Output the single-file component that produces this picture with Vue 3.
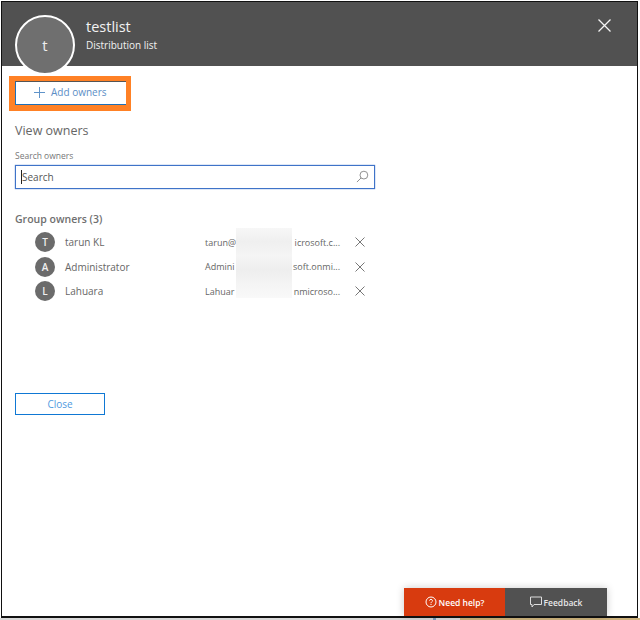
<script setup>
const owners = [
  { initial: 'T', name: 'tarun KL', emailStart: 'tarun@', emailEnd: 'icrosoft.c...' },
  { initial: 'A', name: 'Administrator', emailStart: 'Admini', emailEnd: 'soft.onmi...' },
  { initial: 'L', name: 'Lahuara', emailStart: 'Lahuar', emailEnd: 'nmicroso...' },
]
</script>

<template>
  <div class="page">
    <div class="panel">
      <header class="panel-header">
        <div class="avatar">t</div>
        <div class="titles">
          <div class="title">testlist</div>
          <div class="subtitle">Distribution list</div>
        </div>
        <svg class="close-x" width="13" height="13" viewBox="0 0 13 13">
          <path d="M0.5 0.5 L12.5 12.5 M12.5 0.5 L0.5 12.5" stroke="#f4f4f4" stroke-width="1.3" fill="none" />
        </svg>
      </header>

      <div class="content">
        <div class="highlight">
          <button class="add-btn">
            <svg width="11" height="11" viewBox="0 0 11 11">
              <path d="M5.5 0 V11 M0 5.5 H11" stroke="#5f93c9" stroke-width="1" fill="none" />
            </svg>
            <span>Add owners</span>
          </button>
        </div>

        <h2 class="section-title">View owners</h2>

        <div class="field-label">Search owners</div>
        <div class="search">
          <span class="caret"></span>
          <span class="search-text">Search</span>
          <svg class="search-icon" width="13" height="13" viewBox="0 0 14 14">
            <circle cx="8.5" cy="5.5" r="4.2" stroke="#888" stroke-width="1" fill="none" />
            <path d="M5.5 8.5 L1 13" stroke="#888" stroke-width="1" fill="none" />
          </svg>
        </div>

        <div class="group-title">Group owners (3)</div>
        <div class="owners">
          <div v-for="o in owners" :key="o.initial" class="owner">
            <div class="owner-avatar">{{ o.initial }}</div>
            <div class="owner-name">{{ o.name }}</div>
            <div class="owner-email">
              <span>{{ o.emailStart }}</span>
              <span>{{ o.emailEnd }}</span>
            </div>
            <svg class="owner-x" width="10" height="10" viewBox="0 0 10 10">
              <path d="M0.5 0.5 L9.5 9.5 M9.5 0.5 L0.5 9.5" stroke="#777" stroke-width="1" fill="none" />
            </svg>
          </div>
          <div class="blur-patch"></div>
        </div>

        <button class="close-btn">Close</button>
      </div>

      <div class="help-bar">
        <div class="help-btn need">
          <svg width="12" height="12" viewBox="0 0 12 12">
            <circle cx="6" cy="6" r="5" stroke="#fff" stroke-width="1" fill="none" />
            <path d="M4.5 4.6 C4.6 2.9 7.5 3 7.5 4.7 C7.5 5.8 6 5.8 6 7.2" stroke="#fff" stroke-width="1" fill="none" />
            <rect x="5.5" y="8" width="1" height="1" fill="#fff" />
          </svg>
          <span>Need help?</span>
        </div>
        <div class="help-btn feedback">
          <svg width="12" height="12" viewBox="0 0 12 12">
            <path d="M0.5 1 H11.5 V8.5 H4 L2 11 V8.5 H0.5 Z" stroke="#ddd" stroke-width="1" fill="none" />
          </svg>
          <span>Feedback</span>
        </div>
      </div>
    </div>
    <div class="taskbar"></div>
  </div>
</template>

<style>
html, body {
  margin: 0;
  background: #fff;
}
</style>

<style scoped>
.page {
  width: 640px;
  height: 620px;
  overflow: hidden;
  box-sizing: border-box;
  padding: 1px 0 0 1px;
  font-family: "Open Sans", "Liberation Sans", sans-serif;
  color: #444;
}

.panel {
  position: relative;
  width: 637px;
  height: 617px;
  box-sizing: border-box;
  border: 1px solid #111;
  border-bottom-width: 2px;
  background: #fff;
  display: flex;
  flex-direction: column;
}

.taskbar {
  height: 2px;
  margin-left: -1px;
  background: linear-gradient(90deg, #d8d8d8 0 433px, #7f9fc0 433px 436px, #dcdcdc 436px 460px, #cdb27c 460px);
}

.panel-header {
  position: relative;
  height: 64px;
  flex-shrink: 0;
  background: #515151;
  display: flex;
  padding-left: 84px;
  padding-right: 26px;
  box-sizing: border-box;
  align-items: flex-start;
  justify-content: space-between;
}

.avatar {
  position: absolute;
  left: 13px;
  top: 13px;
  width: 60px;
  height: 60px;
  box-sizing: border-box;
  border: 2px solid #fff;
  border-radius: 50%;
  background: #6f6f6f;
  color: #eee;
  font-size: 15px;
  display: flex;
  align-items: center;
  justify-content: center;
}

.titles {
  padding-top: 14px;
  color: #f2f2f2;
}

.title {
  font-size: 14.5px;
  line-height: 22px;
}

.subtitle {
  font-size: 10px;
  line-height: 15px;
}

.close-x {
  margin-top: 17px;
}

.content {
  flex: 1;
  padding: 10px 0 0 7px;
}

.highlight {
  width: 122px;
  height: 35px;
  box-sizing: border-box;
  border-style: solid;
  border-color: #ff8125;
  border-width: 5px 5px 6px 6px;
  background: #fff;
}

.add-btn {
  width: 111px;
  height: 24px;
  box-sizing: border-box;
  border: 1px solid #1d6fb8;
  border-right: 0;
  border-top-color: #555;
  background: #fff;
  color: #5b8ec6;
  font-family: inherit;
  font-size: 10px;
  padding: 0 0 2px 18px;
  display: flex;
  align-items: center;
  gap: 6px;
}

.section-title {
  margin: 11px 0 0 6px;
  font-size: 12.5px;
  line-height: 18px;
  font-weight: 400;
  color: #666;
}

.field-label {
  margin: 10px 0 0 6px;
  font-size: 8.5px;
  line-height: 12px;
  color: #777;
}

.search {
  margin: 3px 0 0 6px;
  width: 360px;
  height: 24px;
  box-sizing: border-box;
  border: 1px solid #3f73c8;
  box-shadow: 0 0 1px #3f73c8;
  display: flex;
  align-items: center;
  padding: 0 5px 1px 5px;
}

.caret {
  width: 1px;
  height: 14px;
  background: #222;
}

.search-text {
  flex: 1;
  font-size: 10px;
  color: #555;
}

.group-title {
  margin: 23px 0 0 6px;
  font-size: 10.5px;
  line-height: 14px;
  font-weight: 600;
  color: #6f6f6f;
}

.owners {
  position: relative;
  margin: 4px 0 0 26px;
  width: 335px;
}

.blur-patch {
  position: absolute;
  left: 201px;
  top: -2px;
  width: 56px;
  height: 70px;
  background: linear-gradient(180deg, #f7f7f7, #efefef 20%, #f5f5f5 40%, #eeeeee 60%, #f4f4f4 80%, #f9f9f9);
}

.owner {
  height: 24.5px;
  display: flex;
  align-items: center;
}

.owner-avatar {
  width: 20px;
  height: 20px;
  border-radius: 50%;
  background: #6b6b6b;
  color: #f0f0f0;
  font-size: 10px;
  font-weight: 600;
  display: flex;
  align-items: center;
  justify-content: center;
  flex-shrink: 0;
}

.owner-name {
  width: 140px;
  margin-left: 10px;
  font-size: 10px;
  color: #666;
}

.owner-email {
  width: 135px;
  margin-right: 15px;
  display: flex;
  justify-content: space-between;
  font-size: 9px;
  color: #666;
  white-space: nowrap;
}

.owner-x {
  flex-shrink: 0;
}

.close-btn {
  display: block;
  margin: 89px 0 0 6px;
  width: 90px;
  height: 22px;
  box-sizing: border-box;
  border: 1px solid #0f78d4;
  background: #fff;
  color: #4f9ae0;
  font-family: inherit;
  font-size: 10px;
  padding: 0;
}

.help-bar {
  position: absolute;
  right: 30px;
  bottom: 0;
  display: flex;
  height: 28px;
  box-shadow: 0 0 8px rgba(0, 0, 0, 0.2);
}

.help-btn {
  display: flex;
  align-items: center;
  justify-content: center;
  gap: 2px;
  font-size: 8.5px;
  font-weight: 600;
  color: #fff;
}

.need {
  width: 101px;
  background: #d83b0f;
}

.feedback {
  width: 102px;
  background: #515151;
  color: #e8e8e8;
}
</style>
